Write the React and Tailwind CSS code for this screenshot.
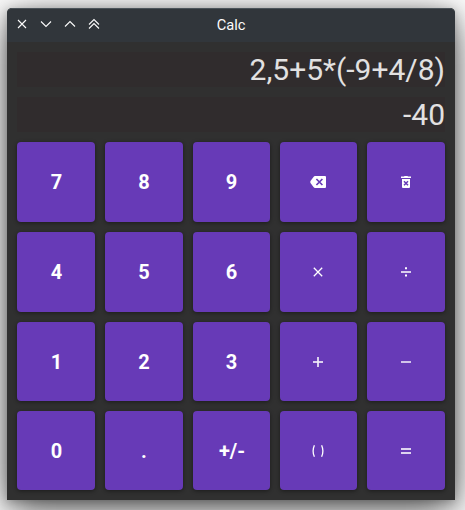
import React from 'react';

function Glyph({ children }) {
  return (
    <svg width="16" height="16" viewBox="0 0 16 16" fill="none" className="block shrink-0" aria-hidden="true">
      {children}
    </svg>
  );
}

const backspace = (
  <Glyph>
    <path
      fillRule="evenodd"
      fill="#fff"
      d="M5 2H15Q16 2 16 3V13Q16 14 15 14H5Q4.2 14 3.7 13.3L0.5 9Q0 8 0.5 7L3.7 2.7Q4.2 2 5 2Z"
    />
    <path d="M6.4 5L12.4 11M12.4 5L6.4 11" stroke="#673ab7" strokeWidth="1.7" />
  </Glyph>
);

const trash = (
  <Glyph>
    <path fill="#fff" d="M3 2.6H6L6.5 2H9.5L10 2.6H13V4H3ZM4 5H12V13Q12 14 11 14H5Q4 14 4 13Z" />
    <path d="M6 7.2L10 11.2M10 7.2L6 11.2" stroke="#673ab7" strokeWidth="1.5" />
  </Glyph>
);

const times = (
  <Glyph>
    <path d="M3.8 3.8L12.2 12.2M12.2 3.8L3.8 12.2" stroke="#fff" strokeWidth="1.3" />
  </Glyph>
);

const divide = (
  <Glyph>
    <path d="M3 7H13V9H3Z" fill="#fff" fillOpacity="0.75" />
    <path d="M7 3.3H9V5.3H7ZM7 10.4H9V12.4H7Z" fill="#fff" />
  </Glyph>
);

const plus = (
  <Glyph>
    <path d="M3 7H7V3H9V7H13V9H9V13H7V9H3Z" fill="#fff" fillOpacity="0.76" />
    <path d="M7.3 7.3H8.7V8.7H7.3Z" fill="#fff" />
  </Glyph>
);

const minus = (
  <Glyph>
    <path d="M3 7H13V9H3Z" fill="#fff" fillOpacity="0.7" />
  </Glyph>
);

const parens = (
  <Glyph>
    <path d="M4.4 2.2Q1.8 8 4.4 13.8M11.6 2.2Q14.2 8 11.6 13.8" stroke="#fff" strokeWidth="1.3" />
  </Glyph>
);

const equals = (
  <Glyph>
    <path d="M3 5H13V7H3ZM3 9H13V11H3Z" fill="#fff" fillOpacity="0.78" />
  </Glyph>
);

const keys = [
  ['7', '8', '9', backspace, trash],
  ['4', '5', '6', times, divide],
  ['1', '2', '3', plus, minus],
  ['0', '.', '+/-', parens, equals],
];

function Key({ label, row, col }) {
  return (
    <button
      className={
        'flex items-center justify-center rounded-[4px] bg-[#673ab7] text-[20px] leading-[24px] font-bold text-white shadow-[0_1px_4px_rgba(0,0,0,0.45)] ' +
        (col === 0 || label === '+/-' ? 'pl-px ' : col === 3 ? 'pr-px ' : '') +
        (row >= 2 ? 'pt-px' : '')
      }
    >
      {label}
    </button>
  );
}

function WindowControls() {
  return (
    <div className="flex gap-2">
      <Glyph>
        <path d="M4 4L12 12M12 4L4 12" stroke="#fcfcfc" strokeWidth="1.1" />
      </Glyph>
      <Glyph>
        <path d="M3 5.5L8 10.5L13 5.5" stroke="#fcfcfc" strokeWidth="1.1" />
      </Glyph>
      <Glyph>
        <path d="M3 10.5L8 5.5L13 10.5" stroke="#fcfcfc" strokeWidth="1.1" />
      </Glyph>
      <Glyph>
        <path d="M3 8.5L8 3.5L13 8.5M3 12.5L8 7.5L13 12.5" stroke="#fcfcfc" strokeWidth="1.1" />
      </Glyph>
    </div>
  );
}

function Display({ value }) {
  return (
    <div className="h-[35px] bg-[#302c2d] text-right text-[30px] leading-[35px] whitespace-nowrap text-[#e2e1e1]">
      {value}
    </div>
  );
}

export default function App() {
  return (
    <div className="h-[510px] w-[465px] overflow-hidden bg-white pt-2 pl-[7px] font-['Roboto','Liberation_Sans',sans-serif]">
      <div className="h-[492px] w-[448px] rounded-t-[5px] bg-[#303030] shadow-[0_10px_40px_rgba(0,0,0,0.7),0_2px_10px_rgba(0,0,0,0.22)]">
        <header className="grid h-[34px] grid-cols-[1fr_auto_1fr] items-start rounded-t-[5px] border-t border-[#4b5359] bg-[#31363b] px-[7px] pt-[7px]">
          <WindowControls />
          <h1 className="text-[14.67px] leading-[18px] text-[#fcfcfc]">Calc</h1>
        </header>
        <main className="flex flex-col gap-[10px] p-[10px]">
          <Display value="2,5+5*(-9+4/8)" />
          <Display value="-40" />
          <div className="grid grid-cols-[78px_78px_77px_77px_78px] grid-rows-[80px_80px_79px_79px] gap-[10px]">
            {keys.map((line, row) =>
              line.map((label, col) => <Key key={`${row}-${col}`} label={label} row={row} col={col} />)
            )}
          </div>
        </main>
      </div>
    </div>
  );
}
